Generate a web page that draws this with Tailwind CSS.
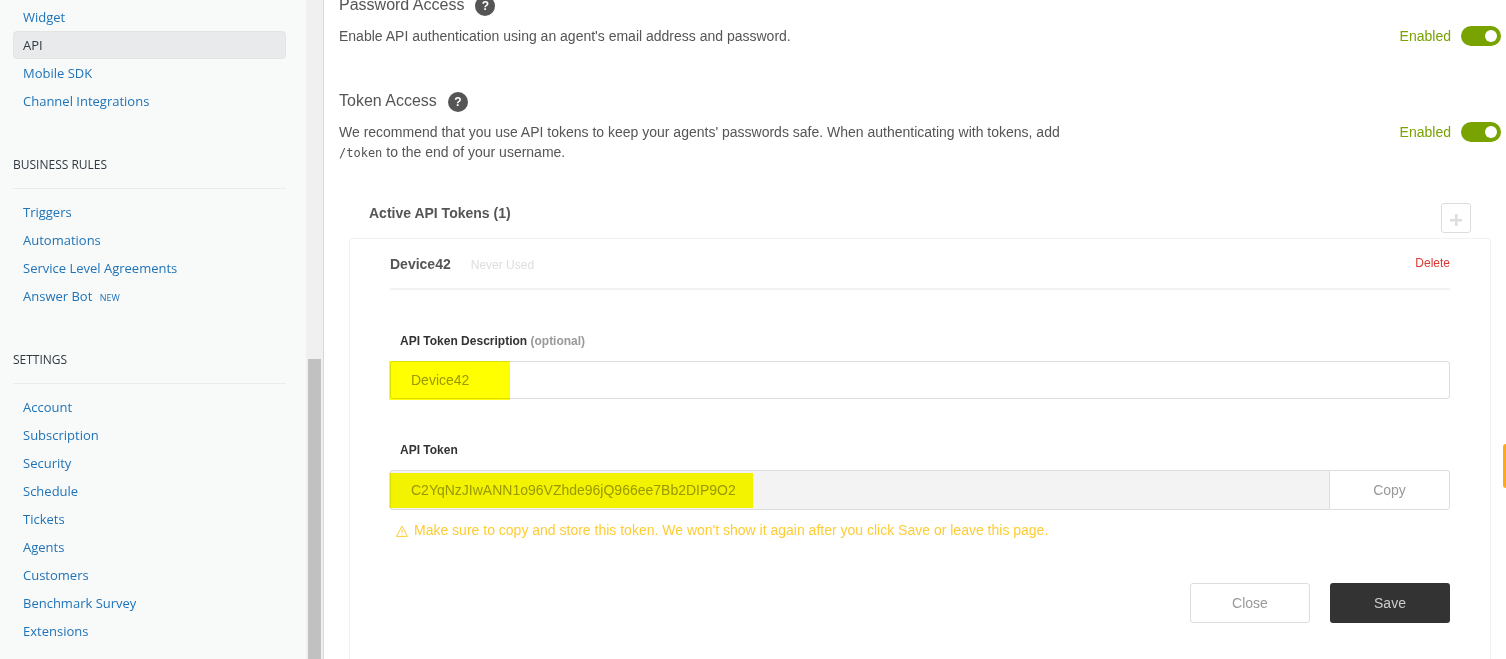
<!DOCTYPE html>
<html lang="en">
<head>
<meta charset="utf-8">
<title>API settings</title>
<script src="https://cdn.jsdelivr.net/npm/@tailwindcss/browser@4"></script>
</head>
<body class="flex h-screen overflow-hidden bg-white font-['Liberation_Sans',Arial,sans-serif] text-sm leading-5 text-[#555]">
<aside class="flex w-[324px] shrink-0 border-r border-[#d8d8d8] bg-[#f8f9f9]">
  <nav class="flex-1 overflow-hidden pr-5 pl-[13px] pt-[3px] font-['Open_Sans','Noto_Sans',sans-serif] text-[13px] leading-7 text-[#1f73b7]">
    <ul>
      <li><a href="#" class="block px-2.5">Widget</a></li>
      <li><a href="#" aria-current="page" class="block rounded-sm border border-[#e2e4e5] bg-[#e9eaeb] px-[9px] leading-[26px] text-[#2f3941]">API</a></li>
      <li><a href="#" class="block px-2.5">Mobile SDK</a></li>
      <li><a href="#" class="block px-2.5">Channel Integrations</a></li>
    </ul>
    <h2 class="mt-10 mb-[9px] border-b border-[#e9ebed] pb-[13px] text-xs leading-5 text-[#2f3941]">BUSINESS RULES</h2>
    <ul>
      <li><a href="#" class="block px-2.5">Triggers</a></li>
      <li><a href="#" class="block px-2.5">Automations</a></li>
      <li><a href="#" class="block px-2.5">Service Level Agreements</a></li>
      <li><a href="#" class="block px-2.5">Answer Bot <span class="ml-1 text-[9px] leading-none">NEW</span></a></li>
    </ul>
    <h2 class="mt-10 mb-[9px] border-b border-[#e9ebed] pb-[13px] text-xs leading-5 text-[#2f3941]">SETTINGS</h2>
    <ul>
      <li><a href="#" class="block px-2.5">Account</a></li>
      <li><a href="#" class="block px-2.5">Subscription</a></li>
      <li><a href="#" class="block px-2.5">Security</a></li>
      <li><a href="#" class="block px-2.5">Schedule</a></li>
      <li><a href="#" class="block px-2.5">Tickets</a></li>
      <li><a href="#" class="block px-2.5">Agents</a></li>
      <li><a href="#" class="block px-2.5">Customers</a></li>
      <li><a href="#" class="block px-2.5">Benchmark Survey</a></li>
      <li><a href="#" class="block px-2.5">Extensions</a></li>
    </ul>
  </nav>
  <div class="flex w-[17px] flex-col bg-[#f0f0f0] px-0.5 pt-[359px]"><div class="flex-1 bg-[#c1c1c1]"></div></div>
</aside>

<main class="relative flex min-w-0 flex-1 flex-col overflow-hidden pl-[15px]">
  <section class="-mt-[5px] pr-[5px]">
    <h2 class="flex h-5 items-center gap-[11px] text-base leading-5">Password Access
      <button type="button" aria-label="Help with password access" class="mt-0.5 size-5 rounded-full bg-[#555] text-xs leading-5 font-bold text-white">?</button></h2>
    <div class="mt-[11px] flex items-start justify-between">
      <p>Enable API authentication using an agent's email address and password.</p>
      <label class="flex items-center gap-2.5 text-[#78a300]">Enabled
        <input type="checkbox" role="switch" checked class="h-5 w-10 appearance-none rounded-full bg-[#78a300] before:mt-1 before:ml-6 before:block before:size-3 before:rounded-full before:bg-white"></label>
    </div>
  </section>
  <section class="mt-[45px] pr-[5px]">
    <h2 class="flex h-5 items-center gap-[11px] text-base leading-5">Token Access
      <button type="button" aria-label="Help with token access" class="mt-0.5 size-5 rounded-full bg-[#555] text-xs leading-5 font-bold text-white">?</button></h2>
    <div class="mt-[11px] flex items-start justify-between">
      <p class="max-w-[740px]">We recommend that you use API tokens to keep your agents' passwords safe. When authenticating with tokens, add <code class="font-['DejaVu_Sans_Mono',monospace] text-xs leading-4">/token</code> to the end of your username.</p>
      <label class="flex items-center gap-2.5 text-[#78a300]">Enabled
        <input type="checkbox" role="switch" checked class="h-5 w-10 appearance-none rounded-full bg-[#78a300] before:mt-1 before:ml-6 before:block before:size-3 before:rounded-full before:bg-white"></label>
    </div>
  </section>

  <div class="mt-[41px] flex items-start justify-between pr-[35px] pl-[30px]">
    <h3 class="font-bold">Active API Tokens (1)</h3>
    <button type="button" aria-label="Add token" class="flex size-[30px] items-center justify-center rounded-[3px] border border-[#ddd] text-[#ddd]">
      <svg class="mt-1 size-3" viewBox="0 0 12 12" fill="currentColor"><path d="M5 0h2.5v5H12v2.5H7.5V12H5V7.5H0V5h5z"/></svg>
    </button>
  </div>

  <form class="mt-[5px] mr-[15px] ml-2.5 flex-1 rounded-t border border-b-0 border-[#f2f2f2] px-10 pt-[15px]">
    <div class="flex items-start border-b-2 border-[#f2f2f2] pb-3">
      <h4 class="font-bold">Device42</h4>
      <span class="ml-5 text-xs leading-[22px] text-[#ddd]">Never Used</span>
      <button type="button" class="ml-auto text-xs leading-[18px] text-[#d93832]">Delete</button>
    </div>
    <label for="description" class="mt-[41px] block pl-2.5 text-xs leading-5 font-bold text-[#333]">API Token Description <span class="text-[#999]">(optional)</span></label>
    <div class="relative mt-2.5">
      <input id="description" type="text" value="Device42" class="block h-[38px] w-full rounded-[3px] border border-[#ddd] bg-white px-5 text-[#999]">
      <div class="absolute top-0 -left-px h-[39px] w-[121px] bg-[#ff0] mix-blend-multiply"></div>
    </div>
    <label for="token" class="mt-[41px] block pl-2.5 text-xs leading-5 font-bold text-[#333]">API Token</label>
    <div class="relative mt-2.5 flex">
      <input id="token" type="text" readonly value="C2YqNzJIwANN1o96VZhde96jQ966ee7Bb2DIP9O2" class="h-10 min-w-0 flex-1 rounded-l-[3px] border border-r-0 border-[#ddd] bg-[#f3f3f3] px-5 text-[#999]">
      <button type="button" class="h-10 w-[121px] rounded-r-[3px] border border-[#ddd] text-[#999]">Copy</button>
      <div class="absolute top-[3px] -left-px h-[35px] w-[364px] bg-[#ff0] mix-blend-multiply"></div>
    </div>
    <p class="mt-2.5 flex items-center gap-1.5 pl-1.5 text-[#fc3]">
      <svg class="mt-0.5 size-3" viewBox="0 0 12 12" fill="none" stroke="currentColor" stroke-linejoin="round"><path d="M6 1 11.4 11.4H.6zM6 4.5v3.5M6 9v1.2" /></svg>
      Make sure to copy and store this token. We won't show it again after you click Save or leave this page.</p>
    <div class="mt-[43px] flex justify-end gap-5">
      <button type="button" class="h-10 w-[120px] rounded-[3px] border border-[#ddd] text-[#999]">Close</button>
      <button type="submit" class="h-10 w-[120px] rounded-[3px] bg-[#333] text-[#ccc]">Save</button>
    </div>
  </form>
  <div class="absolute top-[444px] right-0 h-11 w-[3px] rounded-l-[3px] bg-[#ffa818]"></div>
</main>
</body>
</html>
